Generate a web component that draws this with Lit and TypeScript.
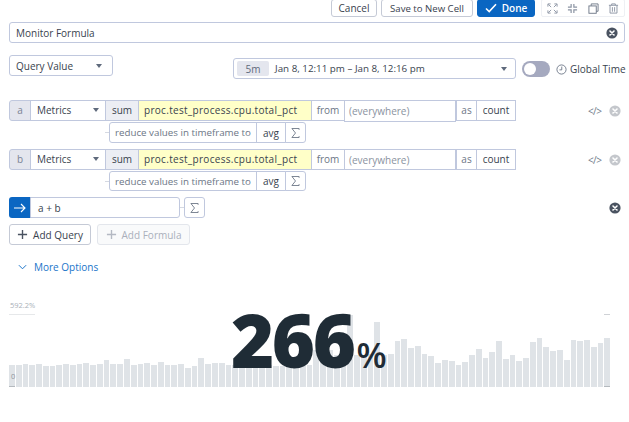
import { LitElement, html, css, svg } from "lit";
import { customElement } from "lit/decorators.js";

const BARS = [210,210,205,210,207,212,213,210,206,210,207,204,210,207,193,207,206,190,210,207,204,210,199,210,210,207,219,212,189,205,
  203,202,208,209,210,212,212,210,208,212,212,210,208,210,208,165,165,165,178,178,60,178,178,175,80,178,177,138,130,158,153,
  175,183,202,195,196,210,199,180,162,189,171,137,192,178,196,189,141,129,155,168,165,195,133,138,134,155,144,128];

const closeIcon = (color: string) => html`<svg class="x" viewBox="0 0 12 12" width="12" height="12"><circle cx="6" cy="6" r="5.6" fill=${color}></circle><path d="M4 4l4 4M8 4l-4 4" stroke="#fff" stroke-width="1.6" stroke-linecap="round"></path></svg>`;
const sigma = html`<svg viewBox="0 0 10 12" width="9" height="12"><path d="M9 2.5V1H1l4 5-4 5h8V9.5" fill="none" stroke="#5f6a7c" stroke-width=".9"></path></svg>`;
const caret = html`<span class="caret"></span>`;

@customElement("app-root")
export class AppRoot extends LitElement {
  static styles = css`
    :host { display: block; height: 422px; overflow: hidden; position: relative; background: #fff; font-family: "Open Sans", "Noto Sans", sans-serif; font-size: 10px; color: #39424e; white-space: nowrap; }
    * { box-sizing: border-box; }
    .page { padding: 0 4px 0 9px; display: flex; flex-direction: column; }
    .box { border: 1px solid #c0c8de; background: #fff; display: flex; align-items: center; flex: none; }
    .top { display: flex; justify-content: flex-end; height: 18px; margin-top: -1px; align-items: stretch; }
    .btn { border: 1px solid #c5cad6; border-radius: 3px; display: flex; align-items: center; justify-content: center; background: #fff; margin-right: 4px; }
    .cancel { width: 46px; }
    .save { width: 92px; font-size: 9.6px; }
    .done { width: 58px; background: #0a66c2; border-color: #0a66c2; color: #fff; gap: 5px; font-weight: 600; margin-right: 6px; }
    .tools { width: 84px; border: 1px solid #eef0f4; border-radius: 2px; display: flex; align-items: center; justify-content: space-between; padding: 0 5px; }
    .title { height: 21px; margin-top: 5px; border-radius: 3px; padding: 0 6px; justify-content: space-between; }
    .controls { display: flex; margin-top: 12px; height: 24px; align-items: flex-start; }
    .qv { width: 104px; height: 21px; border-radius: 3px; padding: 0 6px; justify-content: space-between; }
    .caret { width: 0; height: 0; border: 3.5px solid transparent; border-top: 4px solid #5f6a7c; border-bottom: 0; margin-right: 4px; }
    .date { margin: 3px 0 0 120px; width: 283px; height: 21px; border-radius: 3px; padding: 0 3px; gap: 6px; }
    .chip { background: #e4e6ee; border-radius: 2px; width: 32px; height: 15px; display: flex; align-items: center; justify-content: center; color: #5f6a7c; }
    .date .range { flex: 1; font-size: 9.8px; }
    .date .caret { margin-right: 5px; }
    .toggle { margin: 6px 0 0 6px; width: 28px; height: 16px; background: #a5a9bf; border-radius: 8px; padding: 2px; flex: none; }
    .knob { display: block; width: 12px; height: 12px; background: #fff; border-radius: 50%; }
    .gt { margin: 6px 0 0 6px; display: flex; align-items: center; gap: 3px; height: 16px; }
    .qrow { display: flex; height: 21px; align-items: stretch; position: relative; }
    .qrow .box { margin-left: -1px; padding: 0 6px; }
    .qrow .box:first-child { margin-left: 0; }
    .q1 { margin-top: 21px; }
    .q2 { margin-top: 6px; }
    .label { width: 22px; background: #e4e6ee; border-radius: 3px 0 0 3px; justify-content: center; color: #7a8494; }
    .qrow .label { padding: 0; }
    .metric { width: 76px; justify-content: space-between; }
    .metric .caret { margin-right: 0; }
    .sum { width: 34px; background: #eceef4; justify-content: center; }
    .qrow .sum { padding: 0; }
    .qrow .name { width: 174px; background: #ffffc8; letter-spacing: .3px; padding: 0 5px; }
    .from { width: 34px; color: #6c7686; justify-content: center; }
    .qrow .from { padding: 0; }
    .where { width: 112px; color: #8a92a0; }
    .qrow .where { padding: 0 4px; }
    .q1 .where { height: 22px; }
    .qrow .as { margin-left: 0; width: 21px; color: #6c7686; justify-content: center; padding: 0; }
    .count { width: 40px; justify-content: center; }
    .qrow .count { padding: 0; }
    .qrow > .box.box { padding-bottom: 1px; }
    .qrow > .where.where { padding-bottom: 0; }
    .ends { position: absolute; right: 4px; top: 0; height: 100%; display: flex; align-items: center; gap: 9px; color: #707a8a; font-size: 10px; }
    .code { width: 12px; letter-spacing: -.6px; }
    .rrow { display: flex; height: 21px; margin: 1px 0 0 100px; position: relative; }
    .q2 + .rrow { height: 20px; }
    .rrow::before { content: ""; position: absolute; left: -4px; top: 10px; width: 4px; height: 1px; background: #d5d9e2; }
    .rrow .box { margin-left: -1px; justify-content: center; }
    .rrow .box:first-child { margin-left: 0; border-radius: 3px 0 0 3px; }
    .reduce { width: 148px; color: #6c7686; font-size: 9.75px; }
    .avg { width: 30px; }
    .sig { width: 21px; border-radius: 0 3px 3px 0; }
    .frow { display: flex; height: 21px; margin-top: 6px; position: relative; align-items: stretch; }
    .arrow { width: 22px; background: #0a66c2; border-radius: 3px 0 0 3px; display: flex; align-items: center; justify-content: center; }
    .formula { width: 150px; margin-left: -1px; border-radius: 0 3px 3px 0; padding: 0 7px; }
    .sigbox { width: 21px; margin-left: 4px; border-radius: 3px; justify-content: center; position: relative; }
    .sigbox::before { content: ""; position: absolute; left: -5px; top: 9px; width: 4px; height: 1px; background: #d5d9e2; }
    .arow { display: flex; gap: 6px; margin-top: 6px; height: 21px; }
    .add { border: 1px solid #c5cad6; border-radius: 3px; display: flex; align-items: center; justify-content: center; gap: 5px; }
    .add1 { width: 82px; }
    .add2 { width: 93px; background: #f9fafb; border-color: #e3e6ec; color: #aab0bb; }
    .more { display: flex; align-items: center; gap: 7px; margin: 14px 0 0 9px; color: #1a74c9; height: 15px; }
    .chart { position: absolute; left: 9px; top: 300px; width: 601px; height: 88px; }
    .bars { position: absolute; inset: 0 0 1px 0; display: flex; align-items: flex-end; gap: 1px; }
    .bar { flex: 1; background: #dfe3e7; }
    .ymax { position: absolute; left: 1px; top: 0; font-size: 7.5px; color: #a9b0b8; }
    .tick { position: absolute; height: 1px; background: #e6e8ea; top: 14px; }
    .tl { left: 0; width: 26px; }
    .tr { left: 595px; width: 6px; background: #cfd2d6; }
    .bl { left: 0; width: 6px; top: 86px; background: #b4b9be; }
    .br { left: 595px; width: 6px; top: 86px; background: #b4b9be; }
    .zero { position: absolute; left: 2px; top: 71px; font-size: 7.5px; color: #8f969e; }
    .value { position: absolute; left: 231px; top: 296px; display: flex; align-items: baseline; color: #1f2c36; line-height: 88px; }
    .num { font-size: 74px; font-weight: 800; letter-spacing: -2.5px; }
    .pct { font-size: 35px; font-weight: 600; margin-left: 3px; }
  `;

  private query(letter: string, cls: string) {
    return html`
      <div class="qrow ${cls}">
        <div class="box label">${letter}</div>
        <div class="box metric">Metrics ${caret}</div>
        <div class="box sum">sum</div>
        <div class="box name">proc.test_process.cpu.total_pct</div>
        <div class="box from">from</div>
        <div class="box where">(everywhere)</div>
        <div class="box as">as</div>
        <div class="box count">count</div>
        <div class="ends"><span class="code">&lt;/&gt;</span>${closeIcon("#c4c7cc")}</div>
      </div>
      <div class="rrow">
        <div class="box reduce">reduce values in timeframe to</div>
        <div class="box avg">avg</div>
        <div class="box sig">${sigma}</div>
      </div>`;
  }

  render() {
    const stroke = "#8a93a2";
    return html`
      <div class="page">
        <div class="top">
          <div class="btn cancel">Cancel</div>
          <div class="btn save">Save to New Cell</div>
          <div class="btn done">
            <svg viewBox="0 0 12 10" width="12" height="10"><path d="M1 5.5l3.2 3L11 1.2" fill="none" stroke="#fff" stroke-width="1.6"></path></svg>
            Done
          </div>
          <div class="tools">
            <svg viewBox="0 0 12 12" width="11" height="11" fill="none" stroke=${stroke}>${svg`<path d="M1 4V1h3M8 1h3v3M11 8v3H8M4 11H1V8M1.5 1.5l3 3M10.5 1.5l-3 3M10.5 10.5l-3-3M1.5 10.5l3-3"></path>`}</svg>
            <svg viewBox="0 0 12 12" width="11" height="11" fill="none" stroke=${stroke} stroke-width="1.3">${svg`<path d="M1 4.5h3.5V1M7.5 1v3.5H11M11 7.5H7.5V11M4.5 11V7.5H1"></path>`}</svg>
            <svg viewBox="0 0 12 12" width="11" height="11" fill="none" stroke="#6c7686">${svg`<path d="M3.5 3V1H11v8H9"></path><rect x="1" y="3.2" width="8" height="8"></rect>`}</svg>
            <svg viewBox="0 0 12 12" width="11" height="11" fill="none" stroke=${stroke}>${svg`<path d="M1 2.5h10M4 2.500V1h4v1.500M2.200 2.500V11h7.600V2.500M4.800 4.500v5M7.200 4.500v5"></path>`}</svg>
          </div>
        </div>
        <div class="box title">Monitor Formula ${closeIcon("#4a5361")}</div>
        <div class="controls">
          <div class="box qv">Query Value ${caret}</div>
          <div class="box date">
            <span class="chip">5m</span>
            <span class="range">Jan 8, 12:11 pm – Jan 8, 12:16 pm</span>
            ${caret}
          </div>
          <div class="toggle"><span class="knob"></span></div>
          <div class="gt">
            <svg viewBox="0 0 12 12" width="11" height="11" fill="none" stroke="#5f6a7c" stroke-width=".9">${svg`<circle cx="6" cy="6" r="5"></circle><path d="M6.300 2.800V6.400H3.800"></path>`}</svg>
            Global Time
          </div>
        </div>
        ${this.query("a", "q1")}
        ${this.query("b", "q2")}
        <div class="frow">
          <div class="arrow"><svg viewBox="0 0 12 10" width="12" height="10" fill="none" stroke="#fff" stroke-width="1.100"><path d="M0 5h11M7 1l4 4-4 4"></path></svg></div>
          <div class="box formula">a + b</div>
          <div class="box sigbox">${sigma}</div>
          <div class="ends">${closeIcon("#4a5361")}</div>
        </div>
        <div class="arow">
          <div class="add add1"><svg viewBox="0 0 12 12" width="11" height="11"><path d="M6 1v10M1 6h10" stroke="#4a5361" stroke-width="1.500"></path></svg>Add Query</div>
          <div class="add add2"><svg viewBox="0 0 12 12" width="11" height="11"><path d="M6 1v10M1 6h10" stroke="#b4b9c3" stroke-width="1.500"></path></svg>Add Formula</div>
        </div>
        <div class="more">
          <svg viewBox="0 0 10 6" width="9" height="6" fill="none" stroke="#1a74c9" stroke-width="1.100"><path d="M1 1l4 4 4-4"></path></svg>
          More Options
        </div>
      </div>
      <div class="chart">
        <div class="bars">
          ${BARS.map((t) => html`<div class="bar" style="height:${Math.round((275 - t) / 3)}px"></div>`)}
        </div>
        <span class="ymax">592.2%</span>
        <div class="tick tl"></div>
        <div class="tick tr"></div>
        <div class="tick bl"></div>
        <div class="tick br"></div>
        <span class="zero">0</span>
      </div>
      <div class="value"><span class="num">266</span><span class="pct">%</span></div>
    `;
  }
}
